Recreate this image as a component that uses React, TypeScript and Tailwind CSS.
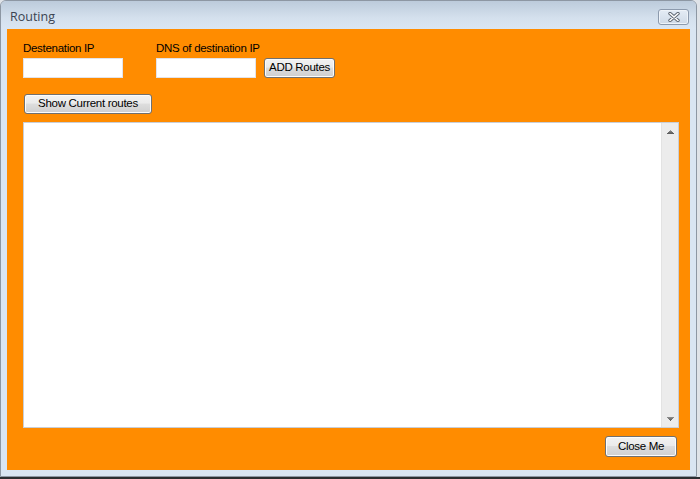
import React from "react";

// ── Classic Win7 button ───────────────────────────────────────────────────────

function WinButton({ label, className = "" }: { label: string; className?: string }) {
  return (
    <button
      className={
        "flex items-center justify-center rounded-[3px] border border-[#707070] " +
        "bg-[linear-gradient(to_bottom,#f2f2f2_0%,#ebebeb_45%,#dddddd_50%,#cfcfcf_100%)] " +
        "text-[11.5px] tracking-[-0.3px] text-black shadow-[inset_0_0_0_1px_#fcfcfc] " +
        className
      }
    >
      {label}
    </button>
  );
}

function ScrollArrow({ up }: { up: boolean }) {
  return (
    <div className="flex h-[17px] w-[17px] items-center justify-center">
      <svg width="7" height="4" viewBox="0 0 7 4">
        {up ? (
          <>
            <path d="M3 0h1v1H3z" fill="#9a9a9a" />
            <path d="M2 1h3v1H2z" fill="#7c7c7c" />
            <path d="M1 2h5v1H1z" fill="#6a6a6a" />
            <path d="M0 3h7v1H0z" fill="#5e5e5e" />
          </>
        ) : (
          <>
            <path d="M0 0h7v1H0z" fill="#8a8a8a" />
            <path d="M1 1h5v1H1z" fill="#7a7a7a" />
            <path d="M2 2h3v1H2z" fill="#6a6a6a" />
            <path d="M3 3h1v1H3z" fill="#5e5e5e" />
          </>
        )}
      </svg>
    </div>
  );
}

function Field({ label, className = "" }: { label: string; className?: string }) {
  return (
    <div className={"flex w-[100px] flex-col " + className}>
      <label className="mb-[3px] whitespace-nowrap text-[11.5px] leading-[13px] tracking-[-0.3px] text-black">
        {label}
      </label>
      <input className="h-[20px] w-[100px] border border-[#e2e3ea] bg-white outline-none" />
    </div>
  );
}

export default function App() {
  return (
    <div
      className="flex h-[479px] w-[700px] flex-col bg-[#dfe3e8]"
      style={{ fontFamily: '"Liberation Sans", Arial, sans-serif' }}
    >
      {/* Window */}
      <div className="flex h-[477px] w-[697px] flex-col rounded-t-[6px] border border-[#8d97a3] bg-[#d9e5f2]">
        {/* Title bar */}
        <div className="flex h-[28px] items-center justify-between rounded-t-[5px] bg-[linear-gradient(to_bottom,#bccbdb,#d4e0ed_60%,#dae6f3)] pl-[9px] pr-[7px]">
          <span
            className="mt-[4px] text-[12.5px] text-[#3b4452]"
            style={{ fontFamily: '"Open Sans", "Noto Sans", sans-serif' }}
          >
            Routing
          </span>
          <div className="mt-[4px] flex h-[16px] w-[31px] items-center justify-center rounded-[3px] border border-[#8c9aad] bg-[linear-gradient(to_bottom,#e4ecf5,#cfdae7)] shadow-[inset_0_0_0_1px_#eef3f9]">
            <svg width="12" height="10" viewBox="0 0 12 10">
              <path
                d="M2 1.5 L10 8.5 M10 1.5 L2 8.5"
                stroke="#5d6570"
                strokeWidth="3.4"
                strokeLinecap="round"
              />
              <path
                d="M2 1.5 L10 8.5 M10 1.5 L2 8.5"
                stroke="#ffffff"
                strokeWidth="1.6"
                strokeLinecap="round"
              />
            </svg>
          </div>
        </div>

        {/* Client area */}
        <div className="mx-[6px] flex h-[441px] flex-col bg-[#ff8c00] pl-[16px] pr-[11px] pt-[13px]">
          {/* Inputs row */}
          <div className="flex items-end">
            <Field label="Destenation IP" />
            <Field label="DNS of destination IP" className="ml-[33px]" />
            <WinButton label="ADD Routes" className="ml-[8px] h-[20px] w-[71px]" />
          </div>

          <WinButton label="Show Current routes" className="ml-[1px] mt-[16px] h-[20px] w-[128px]" />

          {/* Output box */}
          <div className="mt-[8px] flex h-[306px] w-[656px] border border-[#c9ced6] bg-white">
            <div className="flex-1" />
            <div className="flex w-[17px] flex-col justify-between border-l border-[#e3e3e3] bg-[#ececec]">
              <ScrollArrow up />
              <ScrollArrow up={false} />
            </div>
          </div>

          <div className="mt-[8px] flex justify-end">
            <WinButton label="Close Me" className="mr-[2px] h-[21px] w-[72px]" />
          </div>
        </div>
      </div>
      <div className="flex-1 bg-[#2b2d31]" />
    </div>
  );
}
